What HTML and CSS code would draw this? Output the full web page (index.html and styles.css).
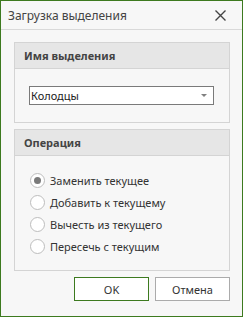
FILE: index.html
```html
<!DOCTYPE html>
<html lang="ru">
<head>
    <meta charset="UTF-8">
    <title>Загрузка выделения</title>
    <link rel="stylesheet" href="styles.css">
</head>
<body>
    <div class="dialog">
        <div class="titlebar">
            <span class="title">Загрузка выделения</span>
            <svg class="close" width="11" height="11" viewBox="0 0 11 11">
                <path d="M0.5 0.5 L10.5 10.5 M10.5 0.5 L0.5 10.5" stroke="#444" stroke-width="1.4" fill="none"/>
            </svg>
        </div>

        <div class="content">
            <div class="group">
                <div class="group-header">Имя выделения</div>
                <div class="group-body name-body">
                    <div class="combo">
                        <span>Колодцы</span>
                        <span class="arrow"></span>
                    </div>
                </div>
            </div>

            <div class="group">
                <div class="group-header">Операция</div>
                <div class="group-body op-body">
                    <div class="radio checked"><span class="dot"></span>Заменить текущее</div>
                    <div class="radio"><span class="dot"></span>Добавить к текущему</div>
                    <div class="radio"><span class="dot"></span>Вычесть из текущего</div>
                    <div class="radio"><span class="dot"></span>Пересечь с текущим</div>
                </div>
            </div>

            <div class="buttons">
                <button class="btn primary">OK</button>
                <button class="btn">Отмена</button>
            </div>
        </div>
    </div>
</body>
</html>
```

FILE: styles.css
```css
body {
    margin: 0;
    font-family: "Noto Sans", "DejaVu Sans", sans-serif;
    color: #333;
}
.dialog {
    width: 241px;
    height: 315px;
    border: 1px solid #3d7a1f;
    background: #f7f7f7;
}
.titlebar {
    height: 28px;
    border-bottom: 1px solid #d9d9d9;
    display: flex;
    align-items: center;
    justify-content: space-between;
    padding: 0 16px 0 7px;
}
.title {
    font-size: 12px;
    color: #444;
}
.close {
    display: block;
}
.content {
    padding: 12px 12px 0 13px;
}
.group {
    border: 1px solid #d4d4d4;
    margin-bottom: 6px;
}
.group-header {
    height: 25px;
    line-height: 25px;
    background: #e6e6e6;
    border-bottom: 1px solid #d4d4d4;
    padding-left: 9px;
    font-size: 11px;
    font-weight: bold;
    color: #444;
}
.name-body {
    padding: 17px 15px 17px 14px;
}
.combo {
    height: 17px;
    border: 1px solid #7a7a7a;
    background: #fff;
    display: flex;
    align-items: center;
    justify-content: space-between;
    font-size: 11px;
    color: #222;
    padding: 0 6px 0 1px;
}
.arrow {
    width: 0;
    height: 0;
    border-left: 3px solid transparent;
    border-right: 3px solid transparent;
    border-top: 3px solid #808080;
}
.op-body {
    padding: 13px 0 13px 15px;
}
.radio {
    display: flex;
    align-items: center;
    height: 22px;
    font-size: 11px;
    color: #333;
}
.dot {
    width: 13px;
    height: 13px;
    border: 1px solid #bdbdbd;
    border-radius: 50%;
    background: #fff;
    margin-right: 5px;
    display: flex;
    align-items: center;
    justify-content: center;
}
.checked .dot::after {
    content: "";
    width: 7px;
    height: 7px;
    border-radius: 50%;
    background: #7a7a7a;
}
.buttons {
    display: flex;
    justify-content: flex-end;
    gap: 6px;
}
.btn {
    width: 75px;
    height: 24px;
    background: #fff;
    border: 1px solid #ababab;
    font-family: "Noto Sans", "DejaVu Sans", sans-serif;
    font-size: 11px;
    color: #333;
    padding: 0;
}
.btn.primary {
    border-color: #3d7a1f;
}
```
